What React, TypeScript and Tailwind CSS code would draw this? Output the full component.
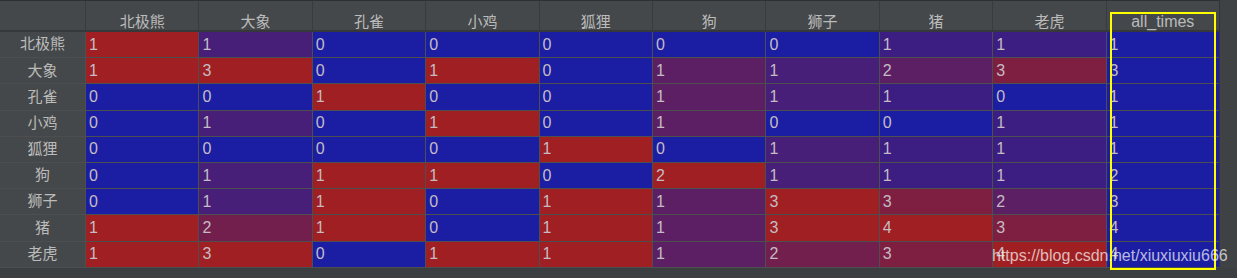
const columns = ["北极熊", "大象", "孔雀", "小鸡", "狐狸", "狗", "狮子", "猪", "老虎", "all_times"];

const rows: [string, number[]][] = [
  ["北极熊", [1, 1, 0, 0, 0, 0, 0, 1, 1, 1]],
  ["大象", [1, 3, 0, 1, 0, 1, 1, 2, 3, 3]],
  ["孔雀", [0, 0, 1, 0, 0, 1, 1, 1, 0, 1]],
  ["小鸡", [0, 1, 0, 1, 0, 1, 0, 0, 1, 1]],
  ["狐狸", [0, 0, 0, 0, 1, 0, 1, 1, 1, 1]],
  ["狗", [0, 1, 1, 1, 0, 2, 1, 1, 1, 2]],
  ["狮子", [0, 1, 1, 0, 1, 1, 3, 3, 2, 3]],
  ["猪", [1, 2, 1, 0, 1, 1, 3, 4, 3, 4]],
  ["老虎", [1, 3, 0, 1, 1, 1, 2, 3, 4, 4]],
];

const blue = [27, 30, 163];
const red = [159, 31, 34];

// per-column max, the last column stays blue
const maxes = columns.map((_, c) => Math.max(...rows.map((r) => r[1][c])));

function cellColor(v: number, c: number) {
  if (c === columns.length - 1) return `rgb(${blue.join(",")})`;
  const t = maxes[c] ? v / maxes[c] : 0;
  const mix = blue.map((b, i) => Math.round(b + (red[i] - b) * t));
  return `rgb(${mix.join(",")})`;
}

export default function App() {
  return (
    <div className="relative w-[1237px] h-[278px] overflow-hidden bg-[#3c3f41] font-['Liberation_Sans','Noto_Sans_CJK_SC',sans-serif] text-[#bbbbbb]">
      <div className="flex">
        <div className="w-[1219px] border-t border-[#2e3032]">
          {/* header */}
          <div className="grid grid-cols-[85px_repeat(10,minmax(0,1fr))] gap-x-px bg-[#393b3d] border-b-2 border-[#36383a]">
            <div className="h-[29px] bg-[#45484a]" />
            {columns.map((c) => (
              <div
                key={c}
                className={
                  c === "all_times"
                    ? "h-[29px] bg-[#45484a] flex items-end justify-center text-[16px] leading-[16px]"
                    : "h-[29px] bg-[#45484a] flex items-end justify-center text-[15px] leading-[16px]"
                }
              >
                {c}
              </div>
            ))}
          </div>

          {/* body */}
          <div className="flex flex-col gap-y-px bg-[#4c4e50] border-b border-[#4c4e50]">
            {rows.map(([name, vals]) => (
              <div key={name} className="grid grid-cols-[85px_repeat(10,minmax(0,1fr))] gap-x-px h-[25.2px]">
                <div className="bg-[#45484a] flex items-center justify-center text-[15px]">{name}</div>
                {vals.map((v, i) => (
                  <div
                    key={i}
                    className="flex items-center pl-[3px] text-[16px] text-[#c4bcc4]"
                    style={{ backgroundColor: cellColor(v, i) }}
                  >
                    {v}
                  </div>
                ))}
              </div>
            ))}
          </div>
        </div>
        <div className="flex-1 border-l border-[#323436] bg-[#3f4244]" />
      </div>

      {/* highlight box */}
      <div className="absolute left-[1110px] top-[12px] w-[106px] h-[258px] border-2 border-[#ffff00]" />

      {/* watermark */}
      <div className="absolute left-[992px] top-[246px] text-[16px] leading-[20px] text-white/70 font-['Liberation_Sans',sans-serif]">
        https://blog.csdn.net/xiuxiuxiu666
      </div>
    </div>
  );
}
